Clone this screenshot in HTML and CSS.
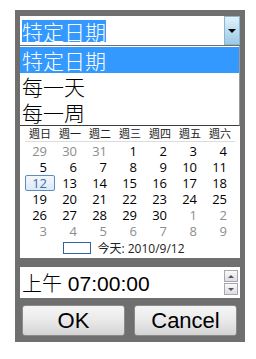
FILE: index.html
```html
<!DOCTYPE html>
<html>
<head lang="zh-Hant">
    <meta charset="UTF-8">
    <title>日期選擇</title>
    <link rel="stylesheet" href="styles.css">
</head>
<body>
    <div class="frame">
        <div class="picker">
            <span class="pickerValue">特定日期</span>
            <span class="pickerArrow"><i></i></span>
        </div>
        <div class="list">
            <div class="listItem selected">特定日期</div>
            <div class="listItem">每一天</div>
            <div class="listItem">每一周</div>
        </div>
        <div class="calendar">
            <div class="weekdays">
                <span>週日</span><span>週一</span><span>週二</span><span>週三</span><span>週四</span><span>週五</span><span>週六</span>
            </div>
            <div class="days">
                <span class="other">29</span><span class="other">30</span><span class="other">31</span><span>1</span><span>2</span><span>3</span><span>4</span>
                <span>5</span><span>6</span><span>7</span><span>8</span><span>9</span><span>10</span><span>11</span>
                <span class="current">12</span><span>13</span><span>14</span><span>15</span><span>16</span><span>17</span><span>18</span>
                <span>19</span><span>20</span><span>21</span><span>22</span><span>23</span><span>24</span><span>25</span>
                <span>26</span><span>27</span><span>28</span><span>29</span><span>30</span><span class="other">1</span><span class="other">2</span>
                <span class="other">3</span><span class="other">4</span><span class="other">5</span><span class="other">6</span><span class="other">7</span><span class="other">8</span><span class="other">9</span>
            </div>
            <div class="today"><span class="todayBox"></span>今天: 2010/9/12</div>
        </div>
        <div class="time">
            <span class="timeText"><span class="ampm">上午</span> 07:00:00</span>
            <span class="spin">
                <span class="spinBtn"><i class="up"></i></span>
                <span class="spinBtn"><i class="down"></i></span>
            </span>
        </div>
        <div class="actions">
            <button class="btn">OK</button>
            <button class="btn">Cancel</button>
        </div>
    </div>
</body>
</html>
```

FILE: styles.css
```css
body {
    margin: 0;
    background: white;
    font-family: "Noto Sans CJK TC", sans-serif;
}
.frame {
    position: relative;
    box-sizing: border-box;
    width: 230px;
    height: 332px;
    margin: 10px 0 0 15px;
    padding: 6px 5px 0;
    background: #6f6f6f;
    display: flex;
    flex-direction: column;
}
.picker {
    height: 29px;
    background: white;
    display: flex;
    align-items: center;
}
.pickerValue {
    margin-left: 2px;
    background: #3399ff;
    color: white;
    font-size: 21px;
    font-weight: 300;
    line-height: 22px;
}
.pickerArrow {
    margin-left: auto;
    box-sizing: border-box;
    width: 16px;
    height: 29px;
    border: 1px solid #8fb4cc;
    background: linear-gradient(#e4f2fb, #b4d9ef 60%, #9cc9e6);
    display: flex;
    align-items: center;
    justify-content: center;
}
.pickerArrow i {
    border-left: 4px solid transparent;
    border-right: 4px solid transparent;
    border-top: 4px solid black;
}
.list {
    position: absolute;
    z-index: 10;
    top: 36px;
    left: 5px;
    box-sizing: border-box;
    width: 220px;
    padding-top: 1px;
    background: white;
    border-bottom: 1px solid #3c3c3c;
    border-right: 1px solid #9a9a9a;
}
.listItem {
    height: 26px;
    line-height: 26px;
    padding-left: 2px;
    font-size: 21px;
    font-weight: 300;
    color: black;
}
.listItem.selected {
    background: #3399ff;
    color: white;
}
.calendar {
    margin-top: 81px;
    height: 132px;
    padding: 0 5px;
    background: white;
}
.weekdays {
    display: grid;
    grid-template-columns: repeat(7, 30px);
    height: 15px;
    border-bottom: 1px solid #dcdcdc;
    font-size: 11px;
    line-height: 15px;
    color: #222;
}
.weekdays span {
    text-align: right;
    padding-right: 4px;
}
.days {
    display: grid;
    grid-template-columns: repeat(7, 30px);
    grid-auto-rows: 16px;
    margin-top: 1px;
    font-family: "Open Sans", sans-serif;
    font-size: 13px;
    line-height: 16px;
    color: black;
}
.days span {
    box-sizing: border-box;
    text-align: right;
    padding-right: 8px;
}
.days .other {
    color: #8d8d8d;
}
.days .current {
    border: 1px solid #5b8cc4;
    border-radius: 2px;
    background: linear-gradient(#f4f8fd, #dde9f6);
    color: #3c6da6;
    padding-right: 7px;
    line-height: 14px;
}
.today {
    display: flex;
    align-items: center;
    justify-content: center;
    height: 16px;
    margin-top: 1px;
    padding-right: 12px;
    font-family: "Open Sans", "Noto Sans CJK TC", sans-serif;
    font-size: 12px;
    color: #222;
}
.todayBox {
    box-sizing: border-box;
    width: 28px;
    height: 12px;
    margin-right: 6px;
    border: 1px solid #2f62a3;
}
.time {
    margin-top: 9px;
    height: 31px;
    background: white;
    display: flex;
    align-items: center;
}
.timeText {
    margin-left: 2px;
    font-family: "Liberation Sans", Arial, sans-serif;
    font-size: 21px;
    color: black;
}
.ampm {
    font-family: "Noto Sans CJK TC", sans-serif;
    font-size: 20px;
    font-weight: 300;
}
.spin {
    margin-left: auto;
    margin-right: 2px;
    display: flex;
    flex-direction: column;
    gap: 1px;
}
.spinBtn {
    box-sizing: border-box;
    width: 14px;
    height: 12px;
    border: 1px solid #a8a8b0;
    background: linear-gradient(#fafafa, #dcdce2);
    display: flex;
    align-items: center;
    justify-content: center;
}
.spinBtn i {
    border-left: 3px solid transparent;
    border-right: 3px solid transparent;
}
.spinBtn .up {
    border-bottom: 3px solid #555;
}
.spinBtn .down {
    border-top: 3px solid #555;
}
.actions {
    margin-top: 7px;
    height: 31px;
    padding: 0 3px 0 2px;
    display: flex;
    gap: 9px;
}
.btn {
    flex: 1;
    margin: 0;
    border: 1px solid #8a8a8a;
    border-radius: 3px;
    background: linear-gradient(#f6f6f6, #e9e9e9 50%, #d4d4d4);
    font-family: "Liberation Sans", Arial, sans-serif;
    font-size: 22px;
    color: black;
    padding: 0;
}
```
